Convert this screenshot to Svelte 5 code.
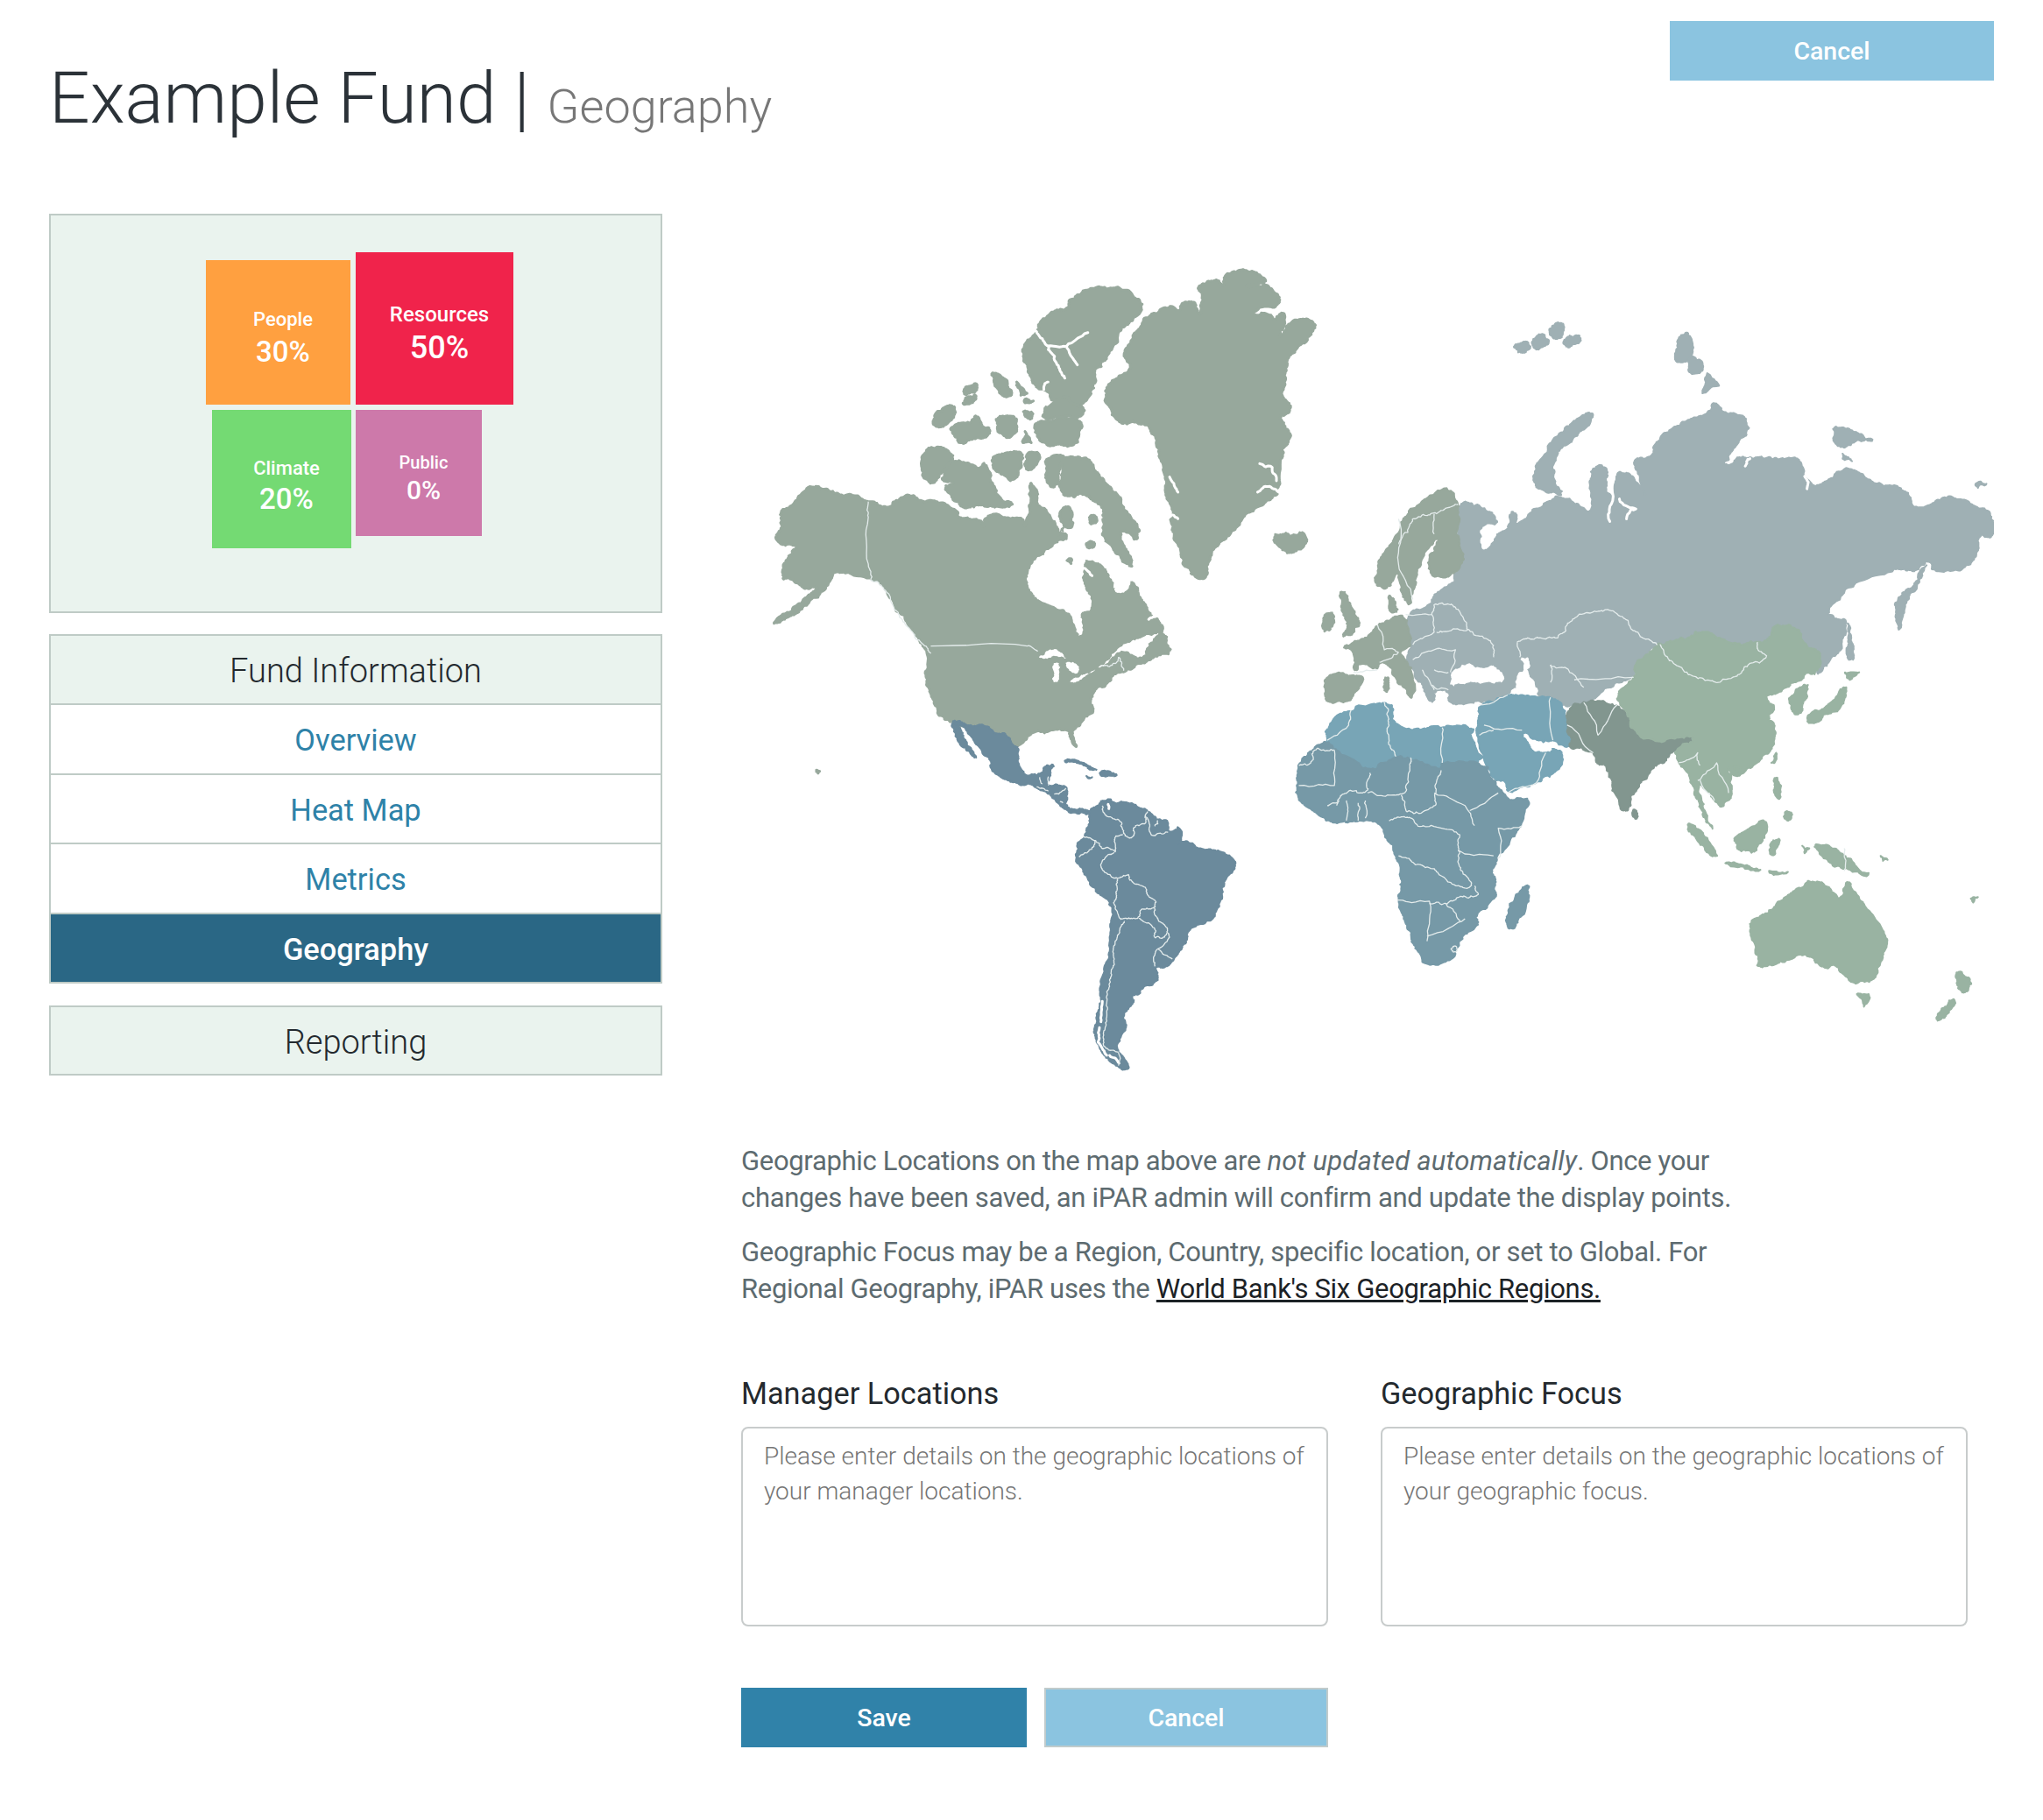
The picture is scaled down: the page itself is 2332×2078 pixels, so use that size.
<script lang="ts">
	const tiles = [
		{ name: 'People', pct: '30%', cls: 'people' },
		{ name: 'Resources', pct: '50%', cls: 'resources' },
		{ name: 'Climate', pct: '20%', cls: 'climate' },
		{ name: 'Public', pct: '0%', cls: 'public' }
	];
	const links = ['Overview', 'Heat Map', 'Metrics', 'Geography'];

	// coastlines are traced coarse, then softened and roughened here.
	// the noise hangs on the vertices, so shared borders stay together
	const hash = (a: number, b: number) => {
		const s = Math.sin(a * 12.9898 + b * 78.233) * 43758.5453;
		return s - Math.floor(s);
	};

	function rough(str: string, closed = true) {
		let pts = str.trim().split(' ').map((p) => p.split(',').map(Number));
		const cut = (list: number[][]) => {
			const out: number[][] = [];
			const n = closed ? list.length : list.length - 1;
			if (!closed) out.push(list[0]);
			for (let i = 0; i < n; i++) {
				const p = list[i];
				const q = list[(i + 1) % list.length];
				out.push([p[0] * 0.8 + q[0] * 0.2, p[1] * 0.8 + q[1] * 0.2]);
				out.push([p[0] * 0.2 + q[0] * 0.8, p[1] * 0.2 + q[1] * 0.8]);
			}
			if (!closed) out.push(list[list.length - 1]);
			return out;
		};
		const noisy = (list: number[][], amp: number) => {
			const out: number[][] = [];
			const n = closed ? list.length : list.length - 1;
			for (let i = 0; i < n; i++) {
				const p = list[i];
				const q = list[(i + 1) % list.length];
				const len = Math.hypot(p[0] - q[0], p[1] - q[1]);
				const a = Math.min(amp, len * 0.22);
				const sx = p[0] + q[0];
				const sy = p[1] + q[1];
				out.push(p);
				out.push([sx / 2 + (hash(sx, sy) - 0.5) * 2 * a, sy / 2 + (hash(sy, sx + 3) - 0.5) * 2 * a]);
			}
			if (!closed) out.push(list[list.length - 1]);
			return out;
		};
		if (pts.length > 3) pts = cut(pts);
		pts = noisy(pts, 5);
		pts = noisy(pts, 3.5);
		pts = noisy(pts, 2);
		return pts.map((p) => p[0].toFixed(1) + ',' + p[1].toFixed(1)).join(' ');
	}
	const land = (list: string[]) => list.map((p) => rough(p));
	const lines = (list: string[]) => list.map((p) => rough(p, false));

	const northAmerica = land([
		'1165,80 1190,68 1225,66 1250,78 1268,98 1222,103 1218,110 1268,105 1285,125 1300,140 1290,160 1235,172 1236,185 1275,180 1285,200 1300,178 1310,180 1310,210 1290,250 1320,205 1350,193 1375,200 1385,213 1370,235 1345,265 1320,290 1315,320 1308,370 1302,400 1325,420 1320,440 1295,450 1312,480 1325,500 1315,525 1300,540 1298,650 1270,675 1215,710 1190,750 1145,790 1128,830 1120,880 1090,870 1070,840 1060,800 1040,745 1045,700 1025,650 1025,600 1005,530 995,490 965,465 925,472 905,455 895,430 880,410 885,395 885,370 920,345 945,320 925,290 945,250 965,215 985,185 1020,165 1040,160 1060,175 1065,150 1095,150 1110,190 1115,130 1100,110 1130,95 1150,90 1165,110',
		'722,205 760,170 790,170 805,135 855,110 925,110 970,150 968,175 940,205 915,225 900,270 880,300 855,330 860,365 830,420 800,430 770,420 745,385 710,370 700,330 685,300 690,255 722,225',
		'452,535 490,530 525,560 490,595 470,632 442,605',
		'500,590 525,565 560,575 580,590 595,570 610,620 625,665 665,680 640,690 600,685 560,690 540,690 520,670 495,635 525,625 490,620',
		'610,560 630,550 655,545 685,545 680,580 660,625 635,600 615,590',
		'695,545 725,545 720,575 700,595 690,580',
		'740,565 760,552 785,555 770,590 770,625 755,640 740,620',
		'775,565 810,555 845,565 860,600 895,640 925,690 965,745 955,780 930,750 915,760 930,800 945,825 945,850 915,820 880,780 870,745 880,710 870,680 835,655 800,665 770,640 780,610',
		'468,465 490,430 520,420 525,445 500,475 480,480',
		'510,480 560,465 575,445 590,480 605,480 600,505 560,510 540,525 520,500',
		'545,375 575,362 575,385 545,395',
		'550,400 575,392 565,415 540,420',
		'608,335 630,340 650,375 660,395 640,400 620,370',
		'670,360 695,390 680,395',
		'620,450 670,450 670,490 650,510 625,490',
		'690,405 710,410 690,415',
		'685,435 710,440 705,460 690,450',
		'715,465 790,455 825,465 820,490 815,525 770,525 735,525 715,490',
		'690,490 705,520 685,520',
		'740,430 785,395 800,415 835,430 820,455 770,450 730,455',
		'93,770 110,745 105,700 130,690 160,650 185,632 215,645 250,655 310,670 360,695 385,670 420,655 440,675 480,672 530,700 530,718 585,722 590,745 605,705 660,720 685,718 690,745 705,690 700,620 722,650 715,680 745,700 765,735 770,770 800,700 830,790 880,835 905,890 915,915 945,880 965,930 985,965 1005,985 1020,1005 1015,1020 1000,1045 1025,1020 1040,1075 1000,1080 985,1095 935,1120 900,1130 880,1160 850,1175 845,1205 855,1225 815,1265 800,1280 815,1325 800,1300 795,1275 735,1280 700,1285 675,1320 660,1310 625,1280 590,1262 555,1270 512,1252 485,1235 470,1195 452,1150 460,1080 440,1040 415,1000 385,960 350,890 325,880 260,860 235,860 205,920 160,955 115,985 85,998 130,960 175,920 200,900 165,905 130,875 110,880 120,825 150,790 110,790',
		'192,1382 200,1385 196,1390'
	]);
	const northAmericaWater = land([
		'695,880 705,840 730,815 770,780 800,770 770,750 800,760 835,820 830,860 830,895 850,930 845,960 820,970 830,1020 815,1030 800,970 770,955 715,930 700,905',
		'830,660 860,680 875,720 870,770 915,830 930,870 905,915 885,850 850,830 820,830 795,770 780,750 800,690 810,660',
		'720,1085 755,1060 780,1075 790,1090 760,1080 740,1090',
		'755,1100 775,1100 770,1150 755,1150',
		'785,1095 820,1105 815,1130 795,1120',
		'792,1150 830,1130 850,1125 860,1115 840,1130 810,1152',
		'860,1115 890,1090 915,1060 950,1040 1000,1025 1010,1020 985,1050 975,1085 945,1078 935,1068 910,1072 885,1100',
		'900,860 925,890 945,880 930,915 905,915',
		'1322,298 1335,298 1330,312 1320,312'
	]);
	const northAmericaIslands = land([
		'843,712 860,712 862,730 845,735',
		'835,785 855,780 855,795 840,798',
		'790,830 800,825 800,838',
		'780,690 800,690 805,740 790,745 772,722'
	]);
	const northAmericaLines = lines([
		'316,675 316,880 345,890 385,970 430,1030 465,1075',
		'465,1055 695,1055 720,1070',
		'870,1108 905,1105 915,1080 925,1120'
	]);
	const northAmericaCuts = lines([
		'715,225 745,270 770,320 785,350',
		'745,265 790,265 840,230',
		'790,270 815,315',
		'735,380 745,360',
		'725,660 745,690 770,735',
		'1250,575 1280,585 1290,620',
		'1245,650 1270,635 1295,650',
		'1035,610 1055,650',
		'1040,710 1055,720',
		'1020,870 1040,760',
		'985,985 1005,975',
		'850,870 830,850'
	]);

	const latinAmerica = land([
		'258,72 285,85 300,125 330,170 345,195 335,195 310,165 280,140 270,105',
		'258,70 285,70 330,88 375,82 410,115 440,110 470,155 488,160 485,215 510,258 560,255 578,222 612,218 595,255 582,290 640,290 655,300 655,348 635,345 660,370 690,375 700,368 728,378 725,390 690,385 650,375 625,355 595,320 550,300 520,282 500,290 450,275 400,245 390,225 395,205 345,150 300,90',
		'645,205 665,200 700,208 735,228 760,238 730,235 705,218 670,208 650,212',
		'765,245 795,240 830,255 800,258 770,258',
		'720,258 740,262 725,265',
		'730,375 775,345 800,335 815,350 880,352 925,375 965,405 1000,410 1000,450 1025,445 1035,430 1050,465 1025,495 1060,480 1115,512 1170,512 1225,540 1230,575 1185,630 1180,695 1155,750 1095,770 1065,795 1065,825 1040,860 1010,900 985,915 955,912 965,945 965,960 905,985 905,1005 875,1010 885,1030 870,1045 845,1085 860,1120 830,1165 825,1195 870,1255 850,1265 790,1230 750,1160 750,1100 770,1030 770,960 800,870 805,760 810,695 745,650 700,570 682,535 690,490 720,455 730,420'
	]);
	const latinAmericaLines = lines([
		'775,360 785,395 840,410 845,445 855,468 885,465 880,430 925,420 920,395 930,380',
		'920,395 935,410 935,445 945,465 1000,450',
		'955,430 965,410',
		'845,458 815,465 820,520 812,510',
		'710,465 750,480 775,505 810,510',
		'750,480 745,505 710,525 695,535',
		'815,520 775,545 770,575 800,600 825,610 865,595',
		'825,610 825,660 815,690 835,750 850,745 880,745 900,745 905,715 955,710 960,685 930,670 925,640 870,620 865,595',
		'850,755 830,800 810,850 815,900 800,960 790,1020 790,1100 775,1170 790,1195 830,1205',
		'900,745 960,785 950,812 985,815 1000,790 990,770 960,745 955,710',
		'1000,795 1005,810 965,850',
		'965,850 1015,885',
		'965,850 950,880 955,910',
		'560,262 570,285',
		'550,295 590,310',
		'590,260 590,290',
		'610,320 650,300',
		'630,345 640,350',
		'830,1205 830,1250'
	]);
	const latinAmericaCuts = lines([
		'775,1030 770,1100',
		'765,1120 760,1170 790,1215',
		'800,1215 830,1240',
		'795,355 797,370'
	]);

	const russia = land([
		'395,410 430,408 470,430 480,450 440,455 440,490 455,505 480,470 500,460 505,425 520,430 515,455 550,425 605,395 640,405 680,430 670,350 695,330 712,345 705,385 720,400 730,345 760,350 785,385 790,395 775,350 765,320 805,315 815,280 860,250 890,240 920,230 935,205 955,230 1000,235 1010,265 975,300 950,335 990,315 1010,320 1050,320 1080,320 1115,320 1125,355 1145,375 1165,370 1200,340 1240,345 1280,375 1340,380 1355,420 1405,405 1430,395 1490,415 1522,435 1522,478 1495,470 1490,500 1480,525 1455,540 1395,545 1385,520 1360,545 1340,540 1320,540 1220,570 1170,625 1190,640 1215,640 1200,700 1165,740 1150,750 1160,705 1130,695 1100,650 1060,650 1050,680 1025,685 990,690 950,680 900,660 880,680 850,680 820,690 785,715 770,735 765,755 715,770 680,800 655,805 620,815 590,795 530,790 515,770 500,790 440,805 380,810 375,780 345,780 340,810 320,770 300,740 285,720 300,690 285,630 340,610 345,590 385,565 395,520 405,510 395,470',
		'1385,525 1370,560 1340,600 1325,670 1315,620 1325,590 1360,570',
		'1215,640 1225,680 1230,720 1215,720 1218,680',
		'555,375 560,335 590,285 630,250 670,228 682,235 650,270 610,300 590,345 620,395 580,385',
		'510,95 540,85 550,100 525,112',
		'548,85 575,70 590,90 560,105',
		'585,65 610,45 620,70 600,85',
		'615,85 650,72 655,88 625,100',
		'860,75 885,70 890,120 860,130 850,120',
		'880,115 910,125 910,150 880,150',
		'920,150 945,175 910,190',
		'1185,255 1215,260 1240,270 1275,285 1235,285 1205,300 1185,285',
		'1205,310 1225,325 1205,320',
		'1485,370 1508,370 1490,378'
	]);
	const eurasiaWater = land([
		'525,715 545,715 540,745 570,790 545,805 525,790 515,760 535,740',
		'380,745 410,725 440,738 470,730 495,755 485,768 420,765 378,775'
	]);
	const europe = land([
		'395,410 385,385 360,378 320,405 280,440 255,490 230,520 218,570 250,580 270,540 275,590 295,615 305,570 310,540 345,480 355,480 330,520 340,555 380,555 410,520 395,470',
		'248,590 262,600 270,625 250,625',
		'145,585 160,585 175,625 190,650 170,670 150,675 165,650 150,620',
		'112,630 135,625 130,660 110,665',
		'225,650 250,640 285,630 300,690 270,705 285,720 300,740 300,800 285,780 250,730 230,725 225,740 190,725 175,745 175,700 150,695 190,680 210,670',
		'115,750 170,750 200,755 175,790 160,805 130,805 115,800',
		'240,755 250,755 248,785 238,780',
		'5,470 30,470 70,465 80,485 45,510 20,500'
	]);
	const mena = land([
		'120,875 115,860 165,815 240,805 260,812 255,845 320,860 360,850 430,855 420,870 455,925 360,925 360,938 295,915 265,912 210,945 135,900 118,885',
		'440,810 500,790 515,790 530,790 590,795 620,815 625,850 640,895 595,880 570,885 530,860 545,890 555,905 580,905 590,905 595,895 620,915 595,950 560,965 500,985 495,960 472,960 432,870 440,830'
	]);
	const africa = land([
		'60,930 90,895 120,880 135,900 210,945 265,912 295,915 360,938 360,925 455,925 470,965 495,990 505,1000 550,995 525,1055 480,1115 465,1140 475,1155 475,1190 430,1230 440,1245 410,1265 385,1315 325,1330 300,1285 285,1240 268,1195 275,1160 265,1110 245,1075 225,1040 165,1040 125,1045 90,1020 60,1000 55,965',
		'545,1165 545,1195 515,1255 500,1255 497,1225 520,1185'
	]);
	const southAsia = land([
		'625,820 655,805 680,800 730,810 750,825 760,860 820,885 835,878 890,870 890,885 850,900 830,925 810,930 770,975 755,1020 740,1020 715,960 705,925 690,930 680,905 630,895 635,880 625,850',
		'765,1015 775,1030 770,1038 762,1030'
	]);
	const eastAsia = land([
		'725,790 770,755 765,735 785,715 815,690 850,680 880,680 900,660 950,680 990,690 1025,685 1050,680 1060,650 1100,650 1130,695 1160,705 1150,750 1130,745 1100,770 1060,790 1040,790 1065,815 1045,835 1065,860 1060,895 1025,925 980,955 960,930 975,990 950,1015 935,1000 900,960 910,1010 935,1060 915,1040 900,1005 890,965 860,925 850,900 890,885 890,870 835,878 820,885 760,860 750,825',
		'875,1042 905,1060 945,1110 925,1110 895,1075',
		'950,1122 1000,1128 1040,1140 990,1135',
		'975,1075 1010,1055 1045,1035 1040,1075 1020,1105 985,1100',
		'1055,1080 1075,1075 1060,1110 1050,1105',
		'1140,1085 1190,1095 1220,1120 1270,1150 1215,1140 1170,1120',
		'1060,955 1070,955 1075,1000 1060,985',
		'1085,1020 1100,1025 1095,1040 1080,1035',
		'1065,905 1062,925 1055,925',
		'975,935 990,935 985,950',
		'1090,800 1120,770 1135,770 1120,810 1120,825 1105,830',
		'1130,830 1170,815 1205,775 1215,775 1205,815 1170,830 1135,850',
		'1210,745 1240,745 1220,760',
		'1010,1240 1040,1225 1090,1190 1135,1160 1170,1165 1200,1200 1215,1155 1240,1195 1300,1270 1295,1300 1270,1360 1225,1365 1190,1325 1165,1335 1130,1305 1080,1320 1025,1335 1025,1300 1010,1265',
		'1235,1385 1260,1385 1250,1410',
		'1445,1335 1480,1360 1460,1385 1445,1370',
		'1445,1390 1425,1430 1400,1440 1415,1415',
		'1050,1140 1090,1142 1060,1148',
		'1120,1090 1135,1095 1125,1105',
		'1285,1110 1300,1118 1290,1120',
		'1475,1195 1490,1192 1480,1203'
	]);
	const eurasiaLines = lines([
		'820,690 840,720 880,750 940,765 990,750 1000,730 1050,715 1025,700 1025,685',
		'520,685 550,675 610,675 630,640 690,622 740,630 770,670 815,690',
		'520,685 525,715',
		'590,730 620,735 660,775',
		'590,730 590,765',
		'640,760 765,755',
		'285,630 340,630 345,610',
		'350,665 415,660 470,685 470,715',
		'340,630 345,665 300,690',
		'345,610 385,610 410,640 415,660',
		'345,700 390,700 380,745',
		'300,720 345,700',
		'320,740 345,780',
		'345,740 375,745',
		'375,780 340,770',
		'270,705 230,725',
		'225,650 240,700 270,705',
		'270,440 270,530 300,600',
		'345,430 345,470',
		'395,410 345,430 300,440 270,490',
		'225,740 175,745',
		'120,880 165,850 170,820',
		'60,930 90,925 92,895 135,900',
		'240,805 250,840 250,890 265,912',
		'362,855 362,925',
		'135,900 135,970 60,970',
		'210,945 205,985 150,985 140,1010',
		'295,915 290,975 275,990 205,985',
		'360,940 345,985 350,1010 290,1030 275,990',
		'345,985 410,1010 430,1050',
		'420,1020 480,985',
		'480,1115 480,1055 530,1050',
		'250,1040 290,1030 310,1050 400,1060 395,1100 400,1140 430,1170 390,1170 340,1135 305,1125 270,1110',
		'268,1198 335,1200 330,1280',
		'335,1205 370,1205 400,1240',
		'330,1270 410,1235',
		'395,1100 470,1110',
		'430,1170 440,1190 400,1190 370,1205',
		'160,1000 160,1040',
		'185,1005 185,1040',
		'200,1000 200,1035',
		'120,1010 145,1000',
		'440,810 500,790',
		'450,850 530,860',
		'470,860 440,870',
		'590,795 595,880',
		'500,985 560,965 580,905',
		'625,850 680,905',
		'660,805 690,870 730,810',
		'1208,1095 1208,1140',
		'900,960 940,925 965,985',
		'905,960 935,1000',
		'860,925 900,905 905,930',
		'380,1295 390,1288 395,1298 385,1302 380,1295'
	]);
	const eurasiaCuts = lines([
		'725,345 722,395 715,445',
		'735,400 770,420 750,440',
		'1125,355 1130,380',
		'1010,320 1000,335'
	]);
</script>

<div class="page">
	<header class="top">
		<h1>Example Fund | <small>Geography</small></h1>
		<button class="btn cancel top-cancel">Cancel</button>
	</header>

	<div class="columns">
		<aside class="side">
			<div class="impact">
				<div class="tiles">
					{#each tiles as t}
						<div class="tile {t.cls}">
							<span class="label">{t.name}</span>
							<span class="pct">{t.pct}</span>
						</div>
					{/each}
				</div>
			</div>

			<nav class="menu">
				<div class="menu-head">Fund Information</div>
				{#each links as link}
					<a href="#top" class="menu-link" class:active={link === 'Geography'}>{link}</a>
				{/each}
			</nav>
			<div class="menu single">
				<div class="menu-head">Reporting</div>
			</div>
		</aside>

		<main class="content">
			<svg class="map" viewBox="846 244 1430 1061" aria-hidden="true">
				<g class="north" transform="translate(840 280) scale(.4783 .4337)">
					{#each northAmerica as p}<polygon class="land" fill="#97a89c" stroke="#97a89c" points={p} />{/each}
					{#each northAmericaWater as p}<polygon fill="#fff" points={p} />{/each}
					{#each northAmericaIslands as p}<polygon class="land" fill="#97a89c" stroke="#97a89c" points={p} />{/each}
					{#each northAmericaCuts as p}<polyline class="cut" points={p} />{/each}
					{#each northAmericaLines as p}<polyline class="line" points={p} />{/each}
				</g>
				<g transform="translate(1000 800) scale(.3333)">
					{#each latinAmerica as p}<polygon class="land" fill="#6b8a9c" stroke="#6b8a9c" points={p} />{/each}
					{#each latinAmericaCuts as p}<polyline class="cut" points={p} />{/each}
					{#each latinAmericaLines as p}<polyline class="line" points={p} />{/each}
				</g>
				<g transform="translate(1450 340) scale(.5421 .574)">
					{#each russia as p}<polygon class="land" fill="#9fb0b4" stroke="#9fb0b4" points={p} />{/each}
					{#each eurasiaWater as p}<polygon fill="#fff" points={p} />{/each}
					{#each eurasiaCuts as p}<polyline class="cut" points={p} />{/each}
					{#each europe as p}<polygon class="land" fill="#97a89c" stroke="#97a89c" points={p} />{/each}
					{#each mena as p}<polygon class="land" fill="#78a5b6" stroke="#78a5b6" points={p} />{/each}
					{#each africa as p}<polygon class="land" fill="#7699a7" stroke="#7699a7" points={p} />{/each}
					{#each southAsia as p}<polygon class="land" fill="#82968f" stroke="#82968f" points={p} />{/each}
					{#each eastAsia as p}<polygon class="land" fill="#99b3a2" stroke="#99b3a2" points={p} />{/each}
					{#each eurasiaLines as p}<polyline class="line" points={p} />{/each}
				</g>
			</svg>

			<div class="intro">
				<p>Geographic Locations on the map above are <em>not updated automatically</em>. Once your changes have been saved, an iPAR admin will confirm and update the display points.</p>
				<p>Geographic Focus may be a Region, Country, specific location, or set to Global. For Regional Geography, iPAR uses the <a href="#top">World Bank's Six Geographic Regions.</a></p>
			</div>

			<div class="fields">
				<label>
					<span>Manager Locations</span>
					<textarea placeholder="Please enter details on the geographic locations of your manager locations."></textarea>
				</label>
				<label>
					<span>Geographic Focus</span>
					<textarea placeholder="Please enter details on the geographic locations of your geographic focus."></textarea>
				</label>
			</div>

			<div class="actions">
				<button class="btn save">Save</button>
				<button class="btn cancel outlined">Cancel</button>
			</div>
		</main>
	</div>
</div>

<style>
	:global(body) {
		margin: 0;
		background: #fff;
		font-family: Roboto, 'Liberation Sans', sans-serif;
	}

	.page {
		width: 2332px;
		height: 2078px;
		box-sizing: border-box;
		padding: 24px 56px 0 56px;
	}

	.top {
		display: flex;
		justify-content: space-between;
		align-items: flex-start;
		height: 220px;
	}

	h1 {
		margin: 38px 0 0 0;
		font-size: 82px;
		line-height: 100px;
		font-weight: 300;
		color: #2b3238;
	}

	h1 small {
		font-size: 54px;
		color: #777;
		font-weight: 300;
	}

	.btn {
		height: 68px;
		border: none;
		font-family: inherit;
		font-size: 28.5px;
		font-weight: 500;
		color: #fff;
		padding: 0;
	}

	.cancel {
		background: #8bc4e0;
	}

	.top-cancel {
		width: 370px;
	}

	.save {
		width: 326px;
		background: #3082a9;
	}

	.outlined {
		width: 324px;
		border: 2px solid #c0cbcc;
		box-sizing: border-box;
	}

	.columns {
		display: grid;
		grid-template-columns: 700px 1430px;
		column-gap: 90px;
	}

	.impact {
		height: 456px;
		box-sizing: border-box;
		border: 2px solid #bfcbc6;
		background: #eaf3ee;
		padding: 42px 0 0 176px;
	}

	.tiles {
		display: grid;
		grid-template-columns: 166px 180px;
		grid-template-rows: 174px 158px;
		gap: 6px;
	}

	.tile {
		display: flex;
		flex-direction: column;
		align-items: center;
		justify-content: center;
		color: #fff;
		padding: 10px 0 0 11px;
		box-sizing: border-box;
	}

	.label {
		font-weight: 500;
		font-size: 22px;
		line-height: 34px;
	}

	.pct {
		font-weight: 500;
		font-size: 33px;
		line-height: 40px;
	}

	.people {
		background: #ffa040;
		width: 165px;
		height: 165px;
		justify-self: end;
		align-self: end;
	}

	.resources {
		background: #f0234b;
		width: 180px;
		height: 174px;
		padding-top: 8px;
	}

	.resources .label {
		font-size: 24px;
		line-height: 36px;
	}

	.resources .pct {
		font-size: 36px;
	}

	.climate {
		background: #74da73;
		width: 159px;
		height: 158px;
		justify-self: end;
		margin-right: -1px;
		padding-top: 12px;
	}

	.climate .pct {
		line-height: 36px;
	}

	.public {
		background: #cd79aa;
		width: 144px;
		height: 144px;
	}

	.public .label {
		font-size: 20px;
		line-height: 30px;
	}

	.public .pct {
		font-size: 30px;
		line-height: 34px;
	}

	.menu {
		display: flex;
		flex-direction: column;
		margin-top: 24px;
		border: 2px solid #bfcbc6;
		border-bottom: none;
	}

	.menu.single {
		margin-top: 25px;
	}

	.menu-head {
		height: 77.4px;
		line-height: 80px;
		text-align: center;
		font-size: 38px;
		font-weight: 300;
		color: #23292e;
		background: #eaf3ee;
		border-bottom: 2px solid #bfcbc6;
	}

	.single .menu-head {
		height: 76.4px;
	}

	.menu-link {
		height: 77.4px;
		line-height: 80px;
		text-align: center;
		font-size: 34.4px;
		color: #2e82a8;
		text-decoration: none;
		border-bottom: 2px solid #bfcbc6;
	}

	.menu-link.active {
		background: #2a6785;
		color: #fff;
		font-weight: 500;
	}

	.map {
		display: block;
		width: 1430px;
		height: 1061px;
	}

	.land {
		stroke-width: 2px;
		stroke-linejoin: round;
		vector-effect: non-scaling-stroke;
	}

	.north .land {
		stroke-width: 3px;
	}

	.line {
		fill: none;
		stroke: #e4ecec;
		stroke-width: 1.3px;
		stroke-linejoin: round;
		vector-effect: non-scaling-stroke;
	}

	.cut {
		fill: none;
		stroke: #fff;
		stroke-width: 3px;
		stroke-linecap: round;
		stroke-linejoin: round;
		vector-effect: non-scaling-stroke;
	}

	.intro {
		width: 1150px;
		font-size: 31px;
		letter-spacing: -0.32px;
		line-height: 42px;
		color: #5d6b70;
	}

	.intro em {
		letter-spacing: 0.2px;
	}

	.intro p {
		margin: 0 0 20px 0;
	}

	.intro a {
		color: #1c2226;
		text-decoration: underline;
	}

	.fields {
		display: grid;
		grid-template-columns: 670px 670px;
		column-gap: 60px;
		margin-top: 76px;
	}

	label span {
		display: block;
		font-size: 34.3px;
		line-height: 44px;
		color: #23292e;
		margin-bottom: 16px;
	}

	textarea {
		display: block;
		width: 100%;
		height: 228px;
		box-sizing: border-box;
		border: 2px solid #c8cccc;
		border-radius: 8px;
		padding: 12px 24px;
		font-family: inherit;
		font-size: 28px;
		font-weight: 300;
		line-height: 40px;
		resize: none;
		outline: none;
		overflow: hidden;
	}

	textarea::placeholder {
		color: #757575;
		opacity: 1;
	}

	.actions {
		display: flex;
		gap: 20px;
		margin-top: 70px;
	}
</style>
